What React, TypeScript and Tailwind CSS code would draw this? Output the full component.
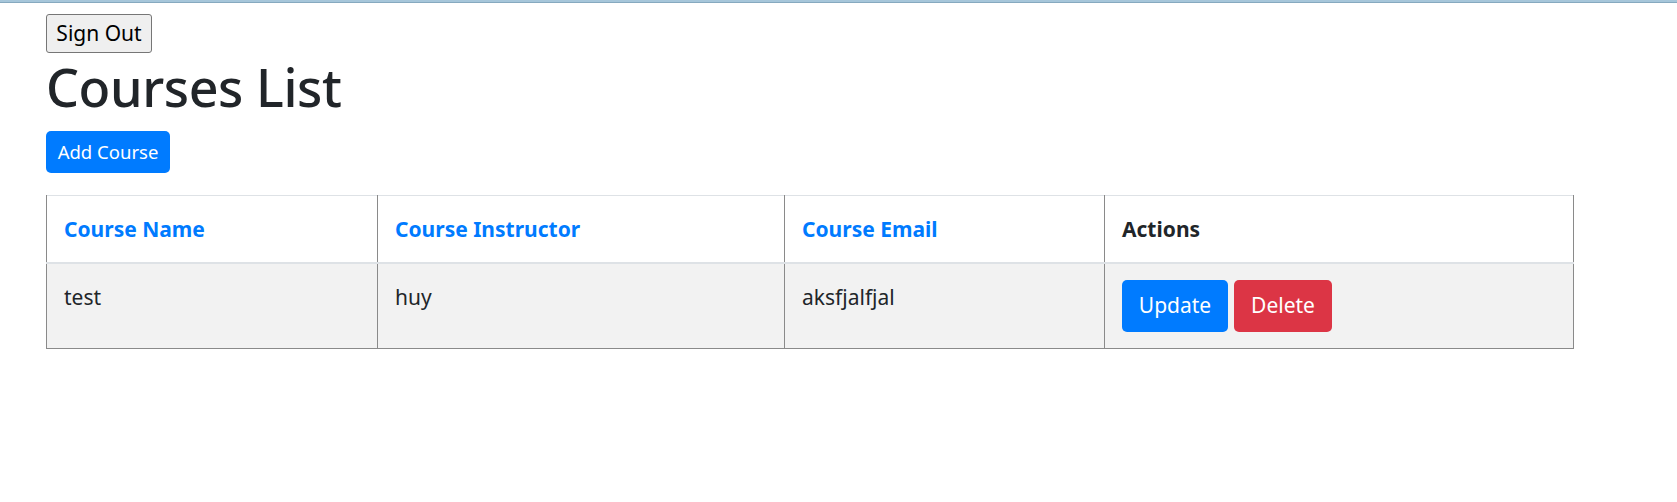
import React from 'react';

const courses = [{ name: 'test', instructor: 'huy', email: 'aksfjalfjal' }];

export default function App() {
  return (
    <div className="min-h-[502px] bg-white text-[#212529]" style={{ fontFamily: '"Noto Sans", "Open Sans", sans-serif' }}>
      {/* browser chrome edge */}
      <div className="h-[3px] bg-[#a6c6da] border-b border-[#86a9bf]" />

      <div className="pl-[46px] pt-[11px]">
        <button className="flex h-[39px] w-[106px] items-center justify-center rounded-[3px] border border-[#767676] bg-[#efefef] text-[21px] text-black">
          Sign Out
        </button>

        <h1 className="mt-[3px] text-[52px] font-medium leading-[62px] tracking-[-0.4px]">Courses List</h1>

        <button className="mt-[13px] flex h-[42px] w-[124px] items-center justify-center rounded-[5px] bg-[#007bff] text-[18.5px] text-white">
          Add Course
        </button>

        <table className="mt-[22px] w-[1527px] table-fixed border-collapse text-[21px]">
          <thead>
            <tr className="border-t border-[#dee2e6]">
              <th className="h-[67px] w-[331px] border-x border-b-2 border-x-[#8a8a8a] border-b-[#dee2e6] px-[17px] pt-[18px] text-left align-top font-bold text-[#007bff]">
                Course Name
              </th>
              <th className="w-[407px] border-x border-b-2 border-x-[#8a8a8a] border-b-[#dee2e6] px-[17px] pt-[18px] text-left align-top font-bold text-[#007bff]">
                Course Instructor
              </th>
              <th className="w-[320px] border-x border-b-2 border-x-[#8a8a8a] border-b-[#dee2e6] px-[17px] pt-[18px] text-left align-top font-bold text-[#007bff]">
                Course Email
              </th>
              <th className="w-[469px] border-x border-b-2 border-x-[#8a8a8a] border-b-[#dee2e6] px-[17px] pt-[18px] text-left align-top font-bold">
                Actions
              </th>
            </tr>
          </thead>
          <tbody>
            {courses.map((c) => (
              <tr key={c.email} className="bg-[#f2f2f2]">
                <td className="h-[86px] border-x border-b border-[#8a8a8a] px-[17px] pt-[18px] align-top">{c.name}</td>
                <td className="border-x border-b border-[#8a8a8a] px-[17px] pt-[18px] align-top">{c.instructor}</td>
                <td className="border-x border-b border-[#8a8a8a] px-[17px] pt-[18px] align-top">{c.email}</td>
                <td className="border-x border-b border-[#8a8a8a] px-[17px] pt-[16px] align-top">
                  <div className="flex gap-[6px]">
                    <button className="flex h-[52px] w-[106px] items-center justify-center rounded-[5px] bg-[#007bff] text-[21px] text-white">
                      Update
                    </button>
                    <button className="flex h-[52px] w-[98px] items-center justify-center rounded-[5px] bg-[#dc3545] text-[21px] text-white">
                      Delete
                    </button>
                  </div>
                </td>
              </tr>
            ))}
          </tbody>
        </table>
      </div>
    </div>
  );
}
